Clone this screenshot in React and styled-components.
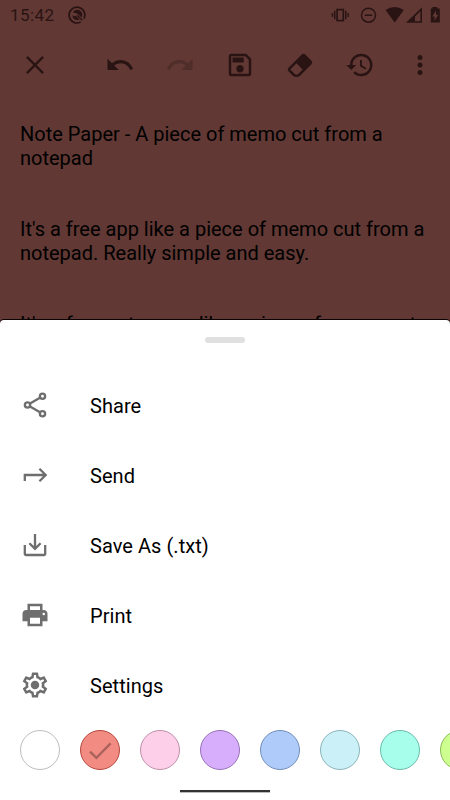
import React, { useState } from 'react'
import styled, { createGlobalStyle } from 'styled-components'

const GlobalStyle = createGlobalStyle`
  * {
    box-sizing: border-box;
  }
  body {
    margin: 0;
    overflow: hidden;
    font-family: Roboto, sans-serif;
  }
`

const Screen = styled.div`
  display: flex;
  flex-direction: column;
  width: 450px;
  height: 800px;
  overflow: hidden;
  background: #613834;
`

const StatusBar = styled.div`
  display: flex;
  align-items: center;
  flex-shrink: 0;
  height: 30px;
  padding: 0 8px 0 10px;
  color: #291413;
`

const Clock = styled.span`
  width: 57px;
  font-size: 17px;
  line-height: 20px;
  letter-spacing: 0.45px;
`

const StatusIcons = styled.div`
  display: flex;
  align-items: center;
  margin-left: auto;
`

const Toolbar = styled.div`
  display: flex;
  align-items: center;
  flex-shrink: 0;
  height: 70px;
  padding: 0 15px 0 20px;
  color: #291413;
`

const ToolButton = styled.button`
  display: flex;
  align-items: center;
  justify-content: center;
  width: 60px;
  height: 60px;
  padding: 0;
  border: 0;
  background: none;
  color: inherit;
  opacity: ${({ $disabled }) => ($disabled ? 0.3 : 1)};
`

const CloseButton = styled(ToolButton)`
  width: 30px;
  margin-right: 40px;
`

const MoreButton = styled(ToolButton)`
  width: 60px;
  margin-right: -15px;
`

const Note = styled.div`
  flex: 1;
  min-height: 0;
  overflow: hidden;
  padding: 23px 20px 0;
  font-size: 20px;
  line-height: 23.75px;
  color: #000;
`

const Paragraph = styled.p`
  margin: 0 -10px 47.5px 0;
  white-space: pre-line;
`

const Sheet = styled.div`
  display: flex;
  flex-direction: column;
  flex-shrink: 0;
  height: 480px;
  border-radius: 4px 4px 0 0;
  background: #fff;
  box-shadow: 0 -1px 0 #0c0303;
`

const Handle = styled.div`
  align-self: center;
  flex-shrink: 0;
  width: 40px;
  height: 6px;
  margin: 17px 0 27px;
  border-radius: 3px;
  background: #e0e0e0;
`

const MenuItem = styled.div`
  display: flex;
  align-items: center;
  flex-shrink: 0;
  gap: 40px;
  height: 70px;
  padding: 0 20px;
  color: #6e6e6e;
`

const MenuLabel = styled.span`
  padding-top: 2px;
  font-size: 20px;
  line-height: 24px;
  letter-spacing: 0.05px;
  color: #000;
`

const Palette = styled.div`
  display: flex;
  flex-shrink: 0;
  gap: 20px;
  height: 60px;
  padding: 10px 20px;
  overflow: hidden;
`

const Swatch = styled.button`
  display: flex;
  align-items: center;
  justify-content: center;
  flex-shrink: 0;
  width: 40px;
  height: 40px;
  padding: 0;
  border: 1px solid ${({ $border }) => $border};
  border-radius: 50%;
  background: ${({ $color }) => $color};
  color: #a9625c;
`

const HomeBar = styled.div`
  align-self: center;
  width: 90px;
  height: 2px;
  margin-top: 10px;
  background: #333;
  box-shadow: 0 1px 0 #bbb;
`

const Icon = ({ d, size = 30, children }) => (
  <svg width={size} height={size} viewBox='0 0 24 24' fill='currentColor' fillRule='evenodd'>
    {d && <path d={d} />}
    {children}
  </svg>
)

const LineIcon = ({ d, width = 2.3 }) => (
  <svg width='30' height='30' viewBox='0 0 30 30' fill='none' stroke='currentColor' strokeWidth={width}>
    <path d={d} />
  </svg>
)

const undoPath = 'M12.5 8c-2.65 0-5.05.99-6.9 2.6L2 7v9h9l-3.62-3.62c1.39-1.16 3.16-1.88 5.12-1.88 3.54 0 6.55 2.31 7.6 5.5l2.37-.78C21.08 11.03 17.15 8 12.5 8z'
const redoPath = 'M18.4 10.6C16.55 8.99 14.15 8 11.5 8c-4.65 0-8.58 3.03-9.96 7.22L3.9 16c1.05-3.19 4.05-5.5 7.6-5.5 1.95 0 3.73.72 5.12 1.88L13 16h9V7l-3.6 3.6z'
const savePath = 'M17 3H5c-1.11 0-2 .9-2 2v14c0 1.1.89 2 2 2h14c1.1 0 2-.9 2-2V7l-4-4zm2 16H5V5h11.17L19 7.83V19zm-7-7c-1.66 0-3 1.34-3 3s1.34 3 3 3 3-1.34 3-3-1.34-3-3-3zM6 6h9v4H6z'
const eraserPath = 'M16.24 3.56l4.95 4.94c.78.79.78 2.05 0 2.84L12 20.53a4.008 4.008 0 0 1-5.66 0L2.81 17c-.78-.79-.78-2.05 0-2.84l10.6-10.6c.79-.78 2.05-.78 2.83 0M4.22 15.58l3.54 3.53c.78.79 2.04.79 2.83 0l3.53-3.53-4.95-4.95-4.95 4.95z'
const historyPath = 'M13 3a9 9 0 0 0-9 9H1l3.89 3.89.07.14L9 12H6c0-3.87 3.13-7 7-7s7 3.13 7 7-3.13 7-7 7c-1.93 0-3.68-.79-4.94-2.06l-1.42 1.42A8.954 8.954 0 0 0 13 21a9 9 0 0 0 0-18zm-1 5v5l4.28 2.54.72-1.21-3.5-2.08V8H12z'
const printPath = 'M6 3h12v5h1c1.66 0 3 1.34 3 3v6h-4v4H6v-4H2v-6c0-1.66 1.34-3 3-3h1zM8 5v3h8V5zM8 14.2V19h8v-4.8zM19 10.2a1 1 0 1 0 0 2 1 1 0 1 0 0-2z'
const gearPath = 'M10,22C9.75,22 9.54,21.82 9.5,21.58L9.13,18.93C8.5,18.68 7.96,18.34 7.44,17.94L4.95,18.95C4.73,19.03 4.46,18.95 4.34,18.73L2.34,15.27C2.21,15.05 2.27,14.78 2.46,14.63L4.57,12.97L4.5,12L4.57,11L2.46,9.37C2.27,9.22 2.21,8.95 2.34,8.73L4.34,5.27C4.46,5.05 4.73,4.96 4.95,5.05L7.44,6.05C7.96,5.66 8.5,5.32 9.13,5.07L9.5,2.42C9.54,2.18 9.75,2 10,2H14C14.25,2 14.46,2.18 14.5,2.42L14.87,5.07C15.5,5.32 16.04,5.66 16.56,6.05L19.05,5.05C19.27,4.96 19.54,5.05 19.66,5.27L21.66,8.73C21.79,8.95 21.73,9.22 21.54,9.37L19.43,11L19.5,12L19.43,13L21.54,14.63C21.73,14.78 21.79,15.05 21.66,15.27L19.66,18.73C19.54,18.95 19.27,19.04 19.05,18.95L16.56,17.95C16.04,18.34 15.5,18.68 14.87,18.93L14.5,21.58C14.46,21.82 14.25,22 14,22H10M11.25,4L10.88,6.61C9.68,6.86 8.62,7.5 7.85,8.39L5.44,7.35L4.69,8.65L6.8,10.2C6.4,11.37 6.4,12.64 6.8,13.8L4.68,15.36L5.43,16.66L7.86,15.62C8.63,16.5 9.68,17.14 10.87,17.38L11.24,20H12.76L13.13,17.39C14.32,17.14 15.37,16.5 16.14,15.62L18.57,16.66L19.32,15.36L17.2,13.81C17.6,12.64 17.6,11.37 17.2,10.2L19.31,8.65L18.56,7.35L16.15,8.39C15.38,7.5 14.32,6.86 13.12,6.62L12.75,4H11.25Z'

const ShareIcon = () => (
  <Icon>
    <g fill='none' stroke='currentColor' strokeWidth='1.9'>
      <circle cx='6' cy='12' r='2.1' />
      <circle cx='18' cy='5' r='2.1' />
      <circle cx='18' cy='19' r='2.1' />
      <path d='M8 10.8L16 6.2M8 13.2l8 4.6' />
    </g>
  </Icon>
)

const SettingsIcon = () => (
  <Icon d={gearPath}>
    <circle cx='12' cy='12' r='3.4' />
  </Icon>
)

const NotificationIcon = () => (
  <svg width='20' height='20' viewBox='0 0 20 20' fill='none' stroke='currentColor' strokeWidth='1.7'>
    <path d='M13.7 17A7.9 7.9 0 1 1 17 13.6' />
    <path d='M5.9 7.4A5 5 0 0 1 14.6 12.4L11.2 9.2L9.4 8.2Z' fill='currentColor' stroke='none' />
    <path d='M5.4 10A4.8 4.8 0 0 0 12.6 14.4L8.6 10.7L7.2 11.4Z' fill='currentColor' stroke='none' />
    <path d='M10 10.2L15.4 15.2' strokeWidth='1.3' />
  </svg>
)

// vibrate, do not disturb, wifi, signal and battery in one strip
const SystemIcons = () => (
  <svg width='112' height='20' viewBox='330 5 112 20' fill='none' stroke='currentColor'>
    <rect x='337.1' y='9.6' width='6.2' height='11' strokeWidth='1.7' />
    <path d='M334.7 10.8v8.5M345.8 10.8v8.5' strokeWidth='1.5' />
    <path d='M332.4 13v4M348.2 13v4' strokeWidth='1.4' />
    <circle cx='368.5' cy='15.2' r='7' strokeWidth='1.5' />
    <path d='M364.8 15.2h7.4' strokeWidth='1.5' />
    <path d='M385.5 9.9Q394.7 4.1 403.8 9.9L394.7 22.4z' fill='currentColor' stroke='none' />
    <path
      d='M406 22.8L422 7.2V22.8zM415 21.2H420.4V11.2L415 16.4z'
      fill='currentColor'
      fillRule='evenodd'
      stroke='none'
    />
    <path
      d='M432.4 7h4.8v1.5h2.6v14h-9v-14h1.6zM436 10.5l-3.7 6h2.3v4.2l3.6-6h-2.2z'
      fill='currentColor'
      fillRule='evenodd'
      stroke='none'
    />
  </svg>
)

const menuItems = [
  { label: 'Share', icon: <ShareIcon /> },
  { label: 'Send', icon: <LineIcon d='M4.8 21V15H25.5M19.4 8.7L25.7 15L19.4 21.3' /> },
  { label: 'Save As (.txt)', icon: <LineIcon d='M15 4V18.5M9.4 13.2L15 18.8L20.6 13.2M4.8 15V24Q4.8 25 5.8 25H24.2Q25.2 25 25.2 24V15' /> },
  { label: 'Print', icon: <Icon d={printPath} /> },
  { label: 'Settings', icon: <SettingsIcon /> }
]

const colors = [
  { color: '#ffffff', border: '#bdbdbd' },
  { color: '#f28b82', border: '#b44840' },
  { color: '#fdcfe8', border: '#bd90a9' },
  { color: '#d7aefb', border: '#9872b9' },
  { color: '#aecbfa', border: '#718eba' },
  { color: '#cbf0f8', border: '#8cb4ba' },
  { color: '#a7ffeb', border: '#68bbaa' },
  { color: '#ccff90', border: '#8cb956' }
]

const App = () => {
  const [selected, setSelected] = useState('#f28b82')
  return (
    <>
      <GlobalStyle />
      <Screen>
        <StatusBar>
          <Clock>15:42</Clock>
          <NotificationIcon />
          <StatusIcons>
            <SystemIcons />
          </StatusIcons>
        </StatusBar>
        <Toolbar>
          <CloseButton aria-label='Close'><LineIcon d='M6.9 6.9L23.1 23.1M23.1 6.9L6.9 23.1' /></CloseButton>
          <ToolButton aria-label='Undo'><Icon d={undoPath} /></ToolButton>
          <ToolButton aria-label='Redo' $disabled><Icon d={redoPath} /></ToolButton>
          <ToolButton aria-label='Save'><Icon d={savePath} /></ToolButton>
          <ToolButton aria-label='Erase'><Icon d={eraserPath} /></ToolButton>
          <ToolButton aria-label='History'><Icon d={historyPath} /></ToolButton>
          <MoreButton aria-label='More'>
            <Icon>
              <circle cx='12' cy='6' r='2' />
              <circle cx='12' cy='12' r='2' />
              <circle cx='12' cy='18' r='2' />
            </Icon>
          </MoreButton>
        </Toolbar>
        <Note>
          <Paragraph>{'Note Paper - A piece of memo cut from a\nnotepad'}</Paragraph>
          <Paragraph>{'It\'s a free app like a piece of memo cut from a\nnotepad. Really simple and easy.'}</Paragraph>
          <Paragraph>{'It\'s a free notes app like a piece of memo cut'}</Paragraph>
        </Note>
        <Sheet>
          <Handle />
          {menuItems.map(({ label, icon }) => (
            <MenuItem key={label}>
              {icon}
              <MenuLabel>{label}</MenuLabel>
            </MenuItem>
          ))}
          <Palette>
            {colors.map(({ color, border }) => (
              <Swatch key={color} $color={color} $border={border} onClick={() => setSelected(color)}>
                {selected === color && <LineIcon d='M5 16.6L11.4 22.8L25.6 8.4' />}
              </Swatch>
            ))}
          </Palette>
          <HomeBar />
        </Sheet>
      </Screen>
    </>
  )
}

export default App
